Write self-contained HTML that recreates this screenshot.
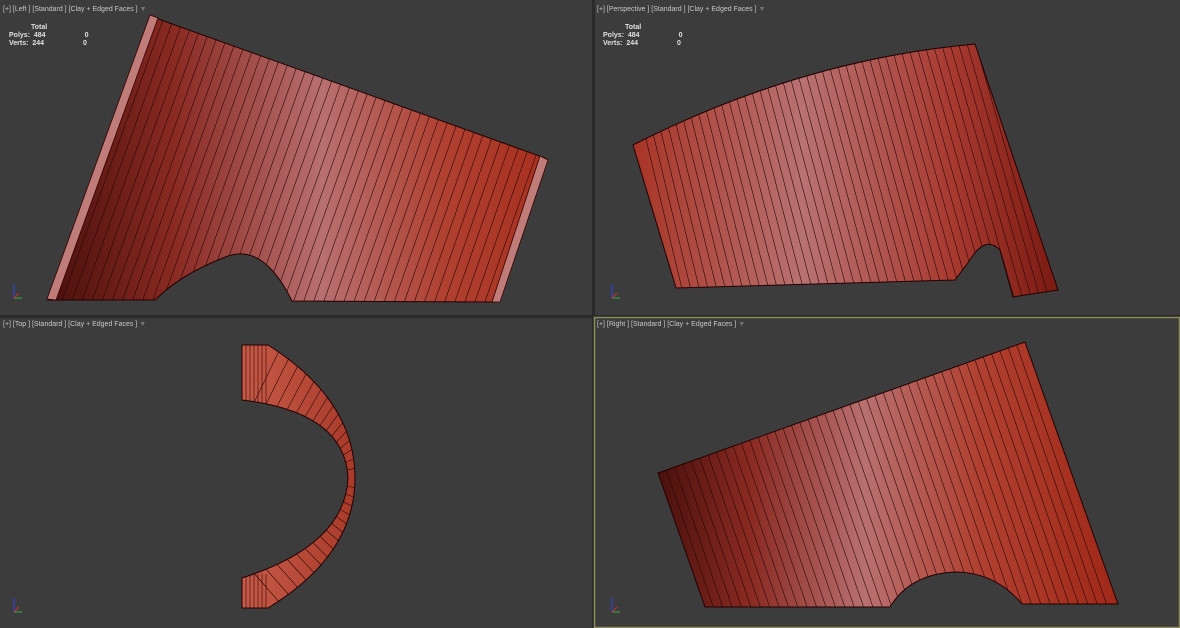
<!DOCTYPE html><html><head><style>
body{margin:0;background:#3c3c3c;width:1180px;height:628px;overflow:hidden;font-family:"Liberation Sans",sans-serif}
.l{position:absolute;font-size:7px;color:#c8c8c8;white-space:nowrap}
.s{position:absolute;font-size:7px;color:#e0e0e0;font-weight:bold;line-height:8px}
</style></head><body>
<svg width="1180" height="628" style="position:absolute;left:0;top:0">
<defs>
<linearGradient id="g1" x1="50" x2="545" gradientUnits="userSpaceOnUse" y1="0" y2="0">
<stop offset="0" stop-color="#4a100c"/><stop offset="0.25" stop-color="#8a2a22"/><stop offset="0.55" stop-color="#b87070"/><stop offset="0.8" stop-color="#b04030"/><stop offset="1" stop-color="#a83020"/></linearGradient>
<linearGradient id="g2" x1="633" x2="1058" gradientUnits="userSpaceOnUse" y1="0" y2="0">
<stop offset="0" stop-color="#a83426"/><stop offset="0.4" stop-color="#b87272"/><stop offset="0.75" stop-color="#a83a30"/><stop offset="1" stop-color="#7a1a12"/></linearGradient>
<linearGradient id="g4" x1="658" x2="1118" gradientUnits="userSpaceOnUse" y1="0" y2="0">
<stop offset="0" stop-color="#4a100c"/><stop offset="0.2" stop-color="#8a2a22"/><stop offset="0.45" stop-color="#b87070"/><stop offset="0.7" stop-color="#b04030"/><stop offset="1" stop-color="#a02818"/></linearGradient>
<linearGradient id="g3" x1="242" x2="355" gradientUnits="userSpaceOnUse" y1="0" y2="0">
<stop offset="0" stop-color="#c85a48"/><stop offset="1" stop-color="#a83a2a"/></linearGradient>
<clipPath id="c1"><path d="M150,16 L545,158 L495,302 L292,301 Q262,240 223,258 Q180,275 155,300 L48,300 Z"/></clipPath>
<clipPath id="c2"><path d="M633,145 Q800,60 975,44 L1058,290 L1013,297 L1000,250 Q985,235 970,260 L955,280 L676,288 Z"/></clipPath>
<clipPath id="c4"><path d="M658,473 L1025,342 L1118,604 L1022,604 Q995,572 955,572 Q910,574 890,607 L705,607 Z"/></clipPath>
<clipPath id="c3"><path d="M242,345 L268,345 Q355,400 355,478 Q355,555 268,608 L242,608 L242,578 Q345,545 348,478 Q345,412 242,400 Z"/></clipPath>
</defs>
<rect x="592" y="0" width="3" height="628" fill="#2a2a2a"/>
<rect x="0" y="315" width="1180" height="3" fill="#2a2a2a"/>
<rect x="594.5" y="317.5" width="585" height="310" fill="none" stroke="#8c8a5a" stroke-width="1.5"/>
<g clip-path="url(#c1)"><rect x="40" y="10" width="520" height="300" fill="url(#g1)"/><g id="L1" stroke="#2a0806" stroke-width="0.6"></g></g>
<path d="M150,16 L545,158 L495,302 L292,301 Q262,240 223,258 Q180,275 155,300 L48,300 Z" fill="none" stroke="#200" stroke-width="1"/>
<path d="M150,15 L158,18 L56,300 L47,299 Z" fill="#c07c78" stroke="#300" stroke-width="0.8"/>
<path d="M540,156 L548,160 L500,302 L492,302 Z" fill="#c07c78" stroke="#300" stroke-width="0.8"/>
<g clip-path="url(#c2)"><rect x="620" y="30" width="450" height="280" fill="url(#g2)"/><g id="L2" stroke="#2a0806" stroke-width="0.6"></g></g>
<path d="M633,145 Q800,60 975,44 L1058,290 L1013,297 L1000,250 Q985,235 970,260 L955,280 L676,288 Z" fill="none" stroke="#200"/>
<g clip-path="url(#c4)"><rect x="650" y="330" width="480" height="290" fill="url(#g4)"/><g id="L4" stroke="#2a0806" stroke-width="0.6"></g></g>
<path d="M658,473 L1025,342 L1118,604 L1022,604 Q995,572 955,572 Q910,574 890,607 L705,607 Z" fill="none" stroke="#200"/>
<g clip-path="url(#c3)"><rect x="240" y="340" width="120" height="275" fill="url(#g3)"/><g id="L3" stroke="#2a0806" stroke-width="0.6"></g></g>
<path d="M242,345 L268,345 Q355,400 355,478 Q355,555 268,608 L242,608 L242,578 Q345,545 348,478 Q345,412 242,400 Z" fill="none" stroke="#200"/>
<g stroke-width="1.2" fill="none">
<path d="M14,298 V284" stroke="#3040d0"/><path d="M14,298 H22" stroke="#30a040"/><path d="M14,298 L19,293" stroke="#c03030"/>
<path d="M612,298 V284" stroke="#3040d0"/><path d="M612,298 H620" stroke="#30a040"/><path d="M612,298 L617,293" stroke="#c03030"/>
<path d="M14,612 V598" stroke="#3040d0"/><path d="M14,612 H22" stroke="#30a040"/><path d="M14,612 L19,607" stroke="#c03030"/>
<path d="M612,612 V598" stroke="#3040d0"/><path d="M612,612 H620" stroke="#30a040"/><path d="M612,612 L617,607" stroke="#c03030"/>
</g>
</svg>
<div class="l" style="left:3px;top:6px">[+] [Left ] [Standard ] [Clay + Edged Faces ] <span style="color:#777">▼</span></div>
<div class="l" style="left:597px;top:6px">[+] [Perspective ] [Standard ] [Clay + Edged Faces ] <span style="color:#777">▼</span></div>
<div class="l" style="left:3px;top:321px">[+] [Top ] [Standard ] [Clay + Edged Faces ] <span style="color:#777">▼</span></div>
<div class="l" style="left:597px;top:321px">[+] [Right ] [Standard ] [Clay + Edged Faces ] <span style="color:#777">▼</span></div>
<div class="s" style="left:9px;top:24px"><span style="margin-left:22px">Total</span><br>Polys:&nbsp; 484<span style="margin-left:39px">0</span><br>Verts:&nbsp; 244<span style="margin-left:39px">0</span></div>
<div class="s" style="left:603px;top:24px"><span style="margin-left:22px">Total</span><br>Polys:&nbsp; 484<span style="margin-left:39px">0</span><br>Verts:&nbsp; 244<span style="margin-left:39px">0</span></div>
<script>
function gen(id,n,a,b,c,d){var g=document.getElementById(id),s='';for(var i=1;i<n;i++){var t=i/n;s+='<line x1="'+(a[0]+(b[0]-a[0])*t)+'" y1="'+(a[1]+(b[1]-a[1])*t)+'" x2="'+(c[0]+(d[0]-c[0])*t)+'" y2="'+(c[1]+(d[1]-c[1])*t)+'"/>';}g.innerHTML=s;}
gen('L1',44,[154,17],[545,158],[52,300],[495,302]);
gen('L2',44,[633,120],[980,30],[676,300],[1058,300]);
gen('L4',44,[658,473],[1025,342],[705,610],[1118,610]);
function q(p0,p1,p2,t){var u=1-t;return [u*u*p0[0]+2*u*t*p1[0]+t*t*p2[0],u*u*p0[1]+2*u*t*p1[1]+t*t*p2[1]];}
var g=document.getElementById('L3'),s='';
for(var i=1;i<16;i++){var t=i/16;
var a=q([268,345],[355,400],[355,478],t),b=q([242,400],[345,412],[348,478],t);s+='<line x1="'+a[0]+'" y1="'+a[1]+'" x2="'+b[0]+'" y2="'+b[1]+'"/>';
a=q([355,478],[355,555],[268,608],t);b=q([348,478],[345,545],[242,578],t);s+='<line x1="'+a[0]+'" y1="'+a[1]+'" x2="'+b[0]+'" y2="'+b[1]+'"/>';}
for(var x=246;x<268;x+=4){s+='<line x1="'+x+'" y1="340" x2="'+x+'" y2="404"/><line x1="'+x+'" y1="574" x2="'+x+'" y2="612"/>';}
g.innerHTML=s;
</script>
</body></html>
